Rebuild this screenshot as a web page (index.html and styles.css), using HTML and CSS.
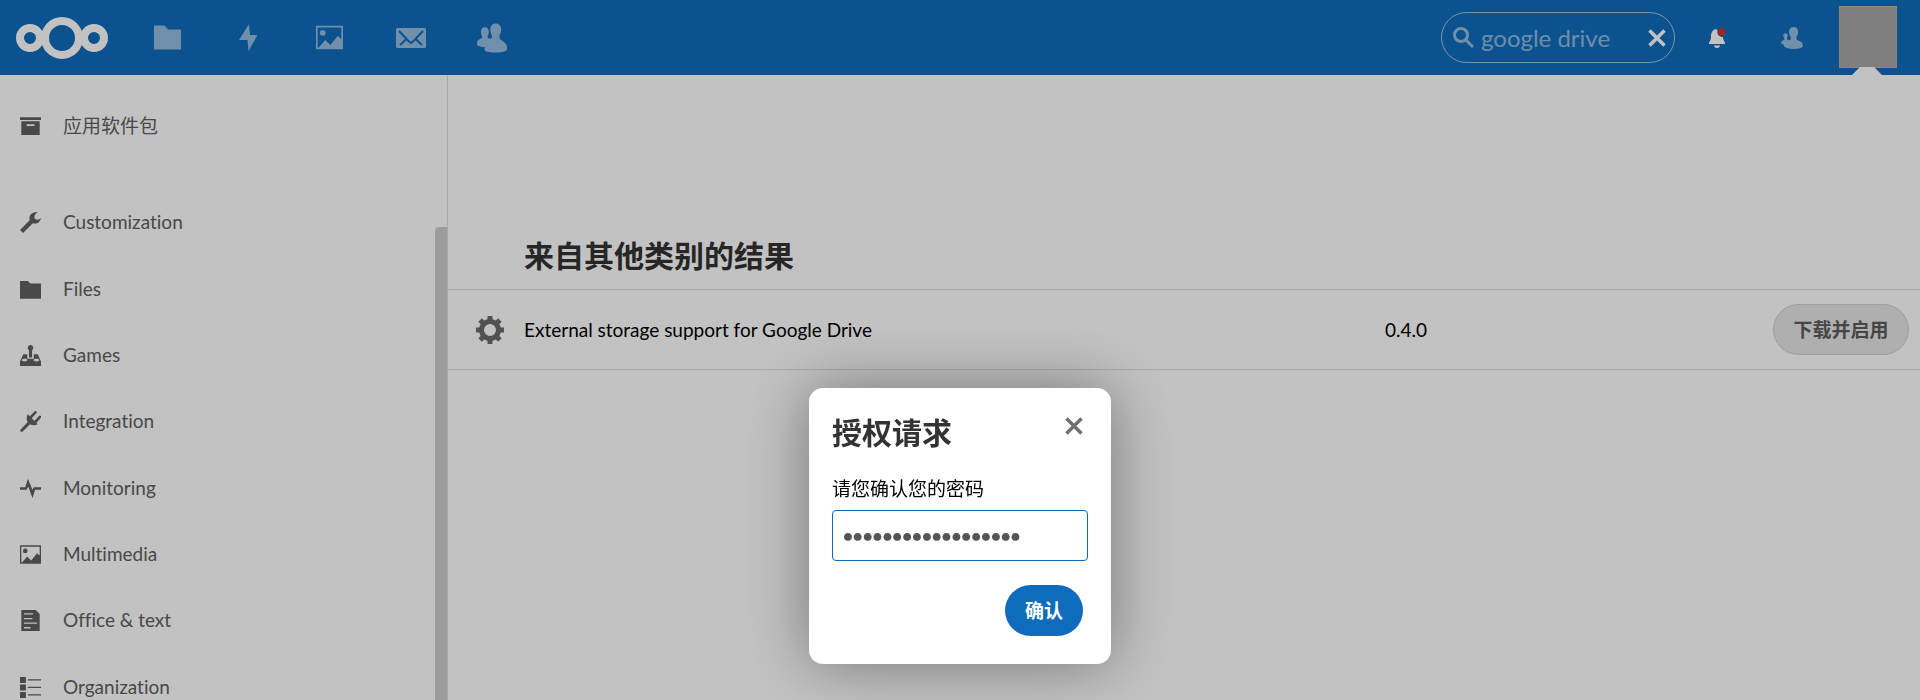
FILE: index.html
```html
<!DOCTYPE html>
<html lang="zh-CN">
<head>
<meta charset="utf-8">
<meta name="viewport" content="width=device-width, initial-scale=1">
<title>应用 - Nextcloud</title>
<link rel="stylesheet" href="styles.css">
</head>
<body>
<svg class="sprite" aria-hidden="true">
  <symbol id="i-folder" viewBox="0 0 16 16"><path d="M0 1.500h6l2 2h8v11.500H0z"/></symbol>
  <symbol id="i-picture" viewBox="0 0 32 28"><path fill-rule="evenodd" d="M0 0h32v28H0zM2 2v24h1l8-9 6 6 9-11 4 4V2z"/><circle cx="8" cy="8.500" r="3.500"/></symbol>
  <symbol id="i-contacts" viewBox="0 0 32 31"><path d="M20 0c-3.500 0-5.800 2.600-5.800 6.300 0 2.400.6 4.600 1.700 6v3.200l-2.200 1c-.8-.5-1.600-.9-2.300-1.300v-2.300c.8-1 1.200-2.500 1.200-4.200C12.600 6 11 4 8.400 4S4.200 6 4.200 8.700c0 1.700.4 3.200 1.200 4.200v2.600C2.600 16.800.6 18 .2 19c-.3 1.700-.2 3.200 0 4.200 1.600 1.100 4.800 1.800 8 2-.2 1.200-.2 2.300 0 3.500C10 30.200 15 31 20 31c5.200 0 10-.9 11.800-2.400.3-2.200.3-4-.2-5.600-1-2.200-4.300-4.700-7.500-6.500v-4.200c1.100-1.400 1.700-3.600 1.700-6C25.800 2.600 23.500 0 20 0z"/></symbol>
  <symbol id="i-menu-contacts" viewBox="0 0 22 22"><path d="M12.500 0C9.800 0 8 2 8 4.800c0 2 .6 3.800 1.600 5v2.700l-1.700.8-2-1v-1.600c.6-.7.9-1.400.9-2.200 0-1.300-.9-2.200-2.200-2.200S2.300 7.200 2.300 8.500c0 .8.3 1.500.9 2.200v2C1.500 13.500.6 14 .3 15c-.2.700-.1 1.300 0 1.700.7.300 1.700.6 2.700.7-.3.800-.3 1.500 0 2.200C4.600 21.200 8.500 22 12.500 22c4 0 7.600-.7 9.200-2 .3-2 .1-3.400-.8-4.600-1.200-1-3.400-2.200-5.400-3V9.800c1-1.200 1.600-3 1.600-5C17.100 2 15.300 0 12.500 0z"/></symbol>
  <symbol id="i-close" viewBox="0 0 18 18"><path d="M1.500 1.500l15 15M16.500 1.500l-15 15" fill="none" stroke="currentColor" stroke-width="3.500"/></symbol>
</svg>

<header class="topbar">
  <a class="logo" href="#" aria-label="Nextcloud">
    <svg viewBox="0 0 94 44"><g fill="none" stroke="currentColor"><circle cx="47" cy="22" r="17" stroke-width="8"/><circle cx="15" cy="22" r="10" stroke-width="8"/><circle cx="79" cy="22" r="10" stroke-width="8"/></g></svg>
  </a>
  <nav class="apps" aria-label="Apps">
    <a href="#" aria-label="Files"><svg class="i-27" viewBox="0 0 27 27"><path d="M0 1.500h10.500l3.500 4h13v20H0z"/></svg></a>
    <a href="#" aria-label="Activity"><svg class="i-27" viewBox="0 0 27 27"><path d="M14 0L4 16h8.500L13.500 27 22.500 11h-7.500z"/></svg></a>
    <a href="#" aria-label="Photos"><svg class="i-27"><use href="#i-picture"/></svg></a>
    <a href="#" aria-label="Mail"><svg class="i-30" viewBox="0 0 30 20"><path d="M1.500 0h27Q30 0 30 1.500v17Q30 20 28.500 20h-27Q0 20 0 18.500v-17Q0 0 1.500 0z"/><path class="cut" d="M3 3l9 9.500 3 2.500 3-2.500L27 3M4 17l6.500-6M26 17l-6.500-6"/></svg></a>
    <a href="#" aria-label="Contacts"><svg class="i-30"><use href="#i-contacts"/></svg></a>
  </nav>
  <div class="tools">
    <form class="search">
      <svg class="glass" viewBox="0 0 21 21"><circle cx="8" cy="8" r="6.500"/><path d="M12.500 12.500l7.500 7.500"/></svg>
      <input type="text" aria-label="搜索" value="google drive">
      <button type="reset" aria-label="清除"><svg><use href="#i-close"/></svg></button>
    </form>
    <button class="tool bell" type="button" aria-label="通知"><svg viewBox="0 0 20 20"><path d="M9 1C5.500 1.500 4 5 4 8.500c0 3-.8 4.500-2 6v1.500h16v-1.500c-1.300-1.500-2-3.200-2-5.500-3 .3-6.500-2-5.500-6.500L9 1zM7 17.500h6c0 1.500-1.300 2.500-3 2.500s-3-1-3-2.500z"/><circle class="dot" cx="14.500" cy="4" r="3.500"/></svg></button>
    <button class="tool people" type="button" aria-label="联系人"><svg><use href="#i-menu-contacts"/></svg></button>
    <button class="avatar" type="button" aria-label="设置"></button>
  </div>
</header>

<div class="layout">
  <nav class="sidebar" aria-label="类别">
    <ul>
      <li class="bundle"><a href="#"><svg viewBox="0 0 16 16"><path fill-rule="evenodd" d="M0 1h16v2H0zM1 4h14v10.500H1zM5 6.300v1.400h6V6.300z"/></svg>应用软件包</a></li>
      <li><a href="#"><svg viewBox="0 0 16 16"><path d="M13.800.4C11.500-.4 8.600.4 7.500 3c-.4 1-.4 2 0 3L0 13.700 2.300 16l7.500-7.500c2.700 1.100 5.500-.6 6.200-4-1 1-2.300 1.600-3.600 1.200C10.800 5.200 10.500 3.500 11.500 2c.6-.9 1.400-1.300 2.300-1.600z"/></svg>Customization</a></li>
      <li><a href="#"><svg><use href="#i-folder"/></svg>Files</a></li>
      <li><a href="#"><svg viewBox="0 0 16 16"><path fill-rule="evenodd" d="M8 0a2.200 2.200 0 0 1 1.200 4v5.500H6.800V4A2.200 2.200 0 0 1 8 0zM2.500 7h3v3.500h5V7h3L16 12.500V16H0v-3.500zM3.500 10.500c-2.800 0-2.800 2 0 2s2.800-2 0-2zm9 0c-2.800 0-2.800 2 0 2s2.800-2 0-2z"/></svg>Games</a></li>
      <li><a href="#"><svg viewBox="0 0 16 16"><path d="M6 2.500l7.500 7.500c-2 1.200-4.300 1-5.800.1L2 15.700c-1 .8-2.300-.6-1.700-1.500L5.800 8.500C4.800 6.800 4.800 4.500 6 2.500z"/><path class="prong" d="M8.500 4.500L11.700 1M12 8l3.200-3.500"/></svg>Integration</a></li>
      <li><a href="#"><svg viewBox="0 0 16 16"><path d="M0 7h4l2-6.500L9.500 9l1-2H16v2h-4.500l-2 6.500-3.200-9L5 9H0z"/></svg>Monitoring</a></li>
      <li><a href="#"><svg><use href="#i-picture"/></svg>Multimedia</a></li>
      <li><a href="#"><svg viewBox="0 0 16 16"><path fill-rule="evenodd" d="M1 0h11l3 3v13H1zM3 2.500v1h7v-1zM3 6v1h6.500V6zM3 9.500v1h10v-1zM3 13v1h5v-1z"/></svg>Office &amp; text</a></li>
      <li><a href="#"><svg viewBox="0 0 16 16"><path d="M0 0h4.500v4.500H0zM0 5.700h4.500v4.500H0zM0 11.500h4.500V16H0zM6 1.700h10v.9H6zM6 7.500h10v.9H6zM6 13.200h10v.9H6z"/></svg>Organization</a></li>
    </ul>
    <div class="scroll-thumb"></div>
  </nav>
  <main class="content">
    <h2>来自其他类别的结果</h2>
    <table class="results">
      <tbody>
        <tr>
          <td class="icon"><svg viewBox="0 0 28 28"><circle cx="14" cy="14" r="8.500"/><path d="M14 0v5M14 23v5M0 14h5M23 14h5M4.100 4.100l3.500 3.500M20.400 20.400l3.500 3.500M4.100 23.900l3.500-3.500M20.400 7.600l3.500-3.500"/></svg></td>
          <td>External storage support for Google Drive</td>
          <td class="version">0.4.0</td>
          <td class="action"><button type="button">下载并启用</button></td>
        </tr>
      </tbody>
    </table>
  </main>
</div>

<div class="overlay">
  <form class="dialog" role="dialog" aria-modal="true" aria-labelledby="dialog-title">
    <div class="dialog-head">
      <h2 id="dialog-title">授权请求</h2>
      <button class="dialog-close" type="button" aria-label="关闭"><svg><use href="#i-close"/></svg></button>
    </div>
    <label for="password">请您确认您的密码</label>
    <input id="password" type="password" value="abcdefghijklmnopqr">
    <div class="dialog-actions"><button type="submit">确认</button></div>
  </form>
</div>
</body>
</html>
```
FILE: styles.css
```css
* { box-sizing: border-box; }

body {
  margin: 0;
  height: 100vh;
  overflow: hidden;
  display: flex;
  flex-direction: column;
  background: #fff;
  color: #000;
  font: 19px/24px Lato, "Noto Sans CJK SC", sans-serif;
  font-variant-ligatures: none;
}

a { color: inherit; text-decoration: none; }
button, input { font: inherit; }
button { cursor: pointer; }
svg { display: block; fill: currentColor; }
.sprite { position: absolute; width: 0; height: 0; }

/* Top bar */
.topbar {
  flex: none;
  height: 75px;
  display: flex;
  align-items: center;
  background: #0f6cbd;
  color: #fff;
}
.logo { margin-left: 15px; }
.logo svg { width: 94px; height: 44px; }
.apps { display: flex; margin-left: 18px; }
.apps a {
  width: 81px;
  height: 75px;
  display: flex;
  align-items: center;
  justify-content: center;
}
.apps svg { opacity: .55; }
.i-27 { width: 27px; height: 27px; }
.i-30 { width: 30px; height: 30px; }
.cut { fill: none; stroke: #0f6cbd; stroke-width: 2; }

.tools { display: flex; align-items: center; margin-left: auto; padding-right: 23px; }
.search {
  width: 234px;
  height: 51px;
  padding: 0 8px 0 11px;
  display: flex;
  align-items: center;
  border: 1px solid rgba(255, 255, 255, .6);
  border-radius: 26px;
}
.glass { flex: none; width: 21px; height: 21px; opacity: .55; }
.glass * { fill: none; stroke: currentColor; stroke-width: 3; }
.search input {
  flex: 1;
  min-width: 0;
  padding: 0 0 0 7px;
  border: 0;
  outline: 0;
  background: none;
  color: rgba(255, 255, 255, .55);
  font-size: 24px;
  line-height: 32px;
}
.search button, .tool, .dialog-close { padding: 0; border: 0; background: none; color: inherit; }
.search svg:not(.glass), .dialog-close svg { width: 18px; height: 18px; }
.tool { display: flex; justify-content: center; width: 75px; }
.bell { margin-left: 4px; }
.bell svg { width: 20px; height: 20px; }
.bell .dot { fill: #f0290c; }
.people svg { width: 22px; height: 22px; opacity: .55; }
.avatar {
  position: relative;
  width: 58px;
  height: 62px;
  margin: 0 0 1px 10px;
  padding: 0;
  border: 1px solid #b4b0a4;
  background: #a8a8a8;
}
.avatar::after {
  content: "";
  position: absolute;
  left: 12px;
  top: 100%;
  width: 30px;
  height: 8px;
  background: #fff;
  clip-path: polygon(8px 0, 22px 0, 100% 100%, 0 100%);
}

/* Page body */
.layout { flex: 1; min-height: 0; display: flex; }
.sidebar {
  position: relative;
  flex: none;
  width: 448px;
  overflow: hidden;
  border-right: 1px solid #dedede;
  color: #606060;
}
.sidebar ul { margin: 0; padding: 18px 0 0; list-style: none; }
.sidebar li:nth-child(3n) { padding-top: 1px; }
.sidebar a { display: flex; align-items: center; gap: 22px; height: 66px; padding-left: 20px; }
.sidebar svg { width: 21px; height: 21px; }
.prong { fill: none; stroke: currentColor; stroke-width: 2; stroke-linecap: round; }
.bundle { margin-bottom: 30px; }
.scroll-thumb {
  position: absolute;
  right: 0;
  top: 152px;
  bottom: 0;
  width: 12px;
  border-radius: 4px 0 0 0;
  background: #cfcfcf;
}

.content { flex: 1; min-width: 0; padding-top: 160px; }
h2 { margin: 0; color: #333; font-size: 30px; line-height: 40px; font-weight: 700; }
.content h2 { padding: 0 0 14px 76px; }
.results { width: 100%; border-collapse: collapse; }
.results td {
  height: 80px;
  padding: 0;
  border-top: 1px solid #e0e0e0;
  border-bottom: 1px solid #e0e0e0;
}
.results .icon { width: 76px; padding-left: 28px; }
.icon svg { width: 28px; height: 28px; color: #6c6c6c; }
.icon svg * { fill: none; stroke: currentColor; stroke-width: 5; }
.results .version { width: 388px; }
.results .action { width: 147px; padding-right: 11px; }
.action button {
  width: 100%;
  height: 51px;
  padding: 0;
  border: 1px solid #d0d0d0;
  border-radius: 26px;
  background: #e6e6e6;
  color: #5c5c5c;
  font-weight: 700;
}

/* Confirmation dialog */
.overlay {
  position: fixed;
  inset: 0;
  display: flex;
  align-items: flex-start;
  justify-content: center;
  padding-top: 388px;
  background: rgba(0, 0, 0, .24);
}
.dialog {
  width: 302px;
  padding: 24px 23px 28px;
  border-radius: 14px;
  background: #fff;
  box-shadow: 0 0 64px rgba(0, 0, 0, .4);
}
.dialog-head { display: flex; align-items: flex-start; justify-content: space-between; padding-bottom: 25px; }
.dialog-close { padding: 5px 5px 0 0; color: #707070; }
.dialog label { display: block; padding-bottom: 9px; }
#password {
  display: block;
  width: 100%;
  height: 51px;
  padding: 0 10px;
  border: 1px solid #0f6cbd;
  border-radius: 4px;
  outline: 0;
  color: #555;
  font-size: 17px;
  font-weight: 900;
}
.dialog-actions { display: flex; justify-content: flex-end; padding: 24px 5px 0 0; }
.dialog-actions button {
  width: 78px;
  height: 51px;
  padding: 0;
  border: 0;
  border-radius: 26px;
  background: #0f6cbd;
  color: #fff;
  font-weight: 700;
}
```
